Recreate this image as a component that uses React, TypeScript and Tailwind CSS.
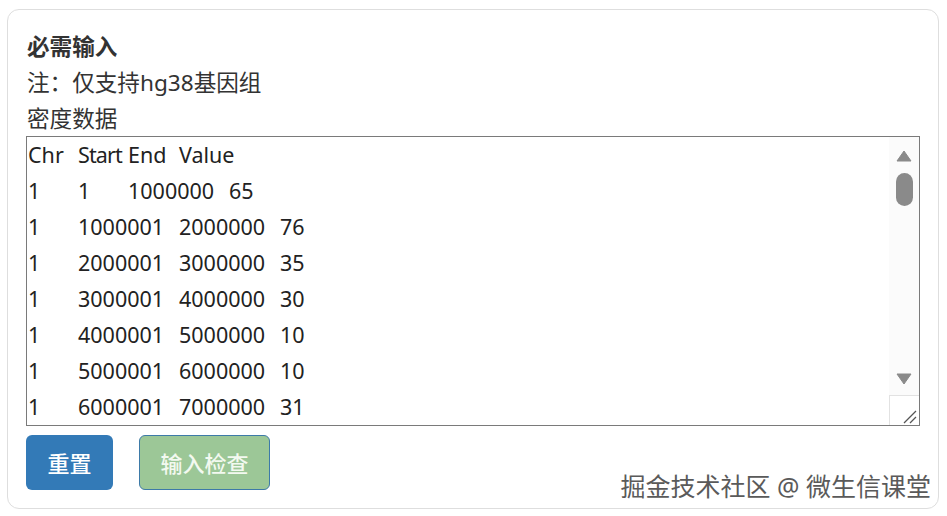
import React from "react";

type Cell = [string, number];
const rows: Cell[][] = [
  [["Chr", 50], ["Start", 50], ["End", 51], ["Value", 0]],
  [["1", 50], ["1", 50], ["1000000", 101], ["65", 0]],
  [["1", 50], ["1000001", 101], ["2000000", 101], ["76", 0]],
  [["1", 50], ["2000001", 101], ["3000000", 101], ["35", 0]],
  [["1", 50], ["3000001", 101], ["4000000", 101], ["30", 0]],
  [["1", 50], ["4000001", 101], ["5000000", 101], ["10", 0]],
  [["1", 50], ["5000001", 101], ["6000000", 101], ["10", 0]],
  [["1", 50], ["6000001", 101], ["7000000", 101], ["31", 0]],
];

export default function App() {
  return (
    <div
      className="w-[947px] h-[516px] bg-white relative overflow-hidden"
      style={{ fontFamily: '"Noto Sans", "Noto Sans CJK SC", sans-serif' }}
    >
      <div className="absolute left-[7px] top-[9px] w-[932px] h-[500px] rounded-[12px] border border-[#dedede]" />
      <div className="relative pt-[29px] pl-[26px] pr-[28px] text-[22.6px] leading-[36px] text-[#333333]">
        <div className="font-bold pl-[1px]">必需输入</div>
        <div className="pl-[1px]">注：仅支持hg38基因组</div>
        <div className="pl-[1px] h-[35px]">密度数据</div>
        <div className="relative w-[894px] h-[290px] border border-[#7a7a7a] bg-white overflow-hidden">
          <div className="pl-[1px] text-[21.5px] text-[#222222] whitespace-nowrap">
            {rows.map((r, i) => (
              <div key={i} className="h-[36px] leading-[36px] flex">
                {r.map(([t, w], j) => (
                  <span
                    key={j}
                    className={t === "Start" ? "tracking-[-0.9px] shrink-0" : "shrink-0"}
                    style={w ? { width: w } : undefined}
                  >
                    {t}
                  </span>
                ))}
              </div>
            ))}
          </div>
          <div className="absolute right-0 top-0 bottom-0 w-[30px] bg-[#fbfbfb] flex flex-col items-center">
            <svg width="16" height="12" viewBox="0 0 16 12" className="mt-[13px]">
              <path d="M8 1 L15 11 L1 11 Z" fill="#8a8a8a" strokeLinejoin="round" stroke="#8a8a8a" strokeWidth="1" />
            </svg>
            <div className="mt-[11px] w-[17px] h-[33px] rounded-full bg-[#8a8a8a] ml-[1px]" />
            <div className="flex-1" />
            <svg width="16" height="12" viewBox="0 0 16 12" className="mb-[40px]">
              <path d="M1 1 L15 1 L8 11 Z" fill="#8a8a8a" strokeLinejoin="round" stroke="#8a8a8a" strokeWidth="1" />
            </svg>
          </div>
          <div className="absolute right-0 bottom-0 w-[30px] h-[30px] bg-white border-l border-t border-[#e2e2e2]">
            <svg width="30" height="30" viewBox="0 0 30 30" className="absolute left-0 top-0">
              <path d="M14 27 L26 15 M20 27 L26 21" stroke="#555555" strokeWidth="1.3" />
            </svg>
          </div>
        </div>
        <div className="flex gap-[26px] mt-[9px]">
          <button className="w-[87px] h-[55px] rounded-[6px] bg-[#337ab7] text-white text-[22px] leading-none font-medium">
            重置
          </button>
          <button className="w-[131px] h-[55px] rounded-[6px] bg-[#9cc797] border border-[#3d7aa8] text-[#f3f9f0] text-[22px] leading-none font-medium">
            输入检查
          </button>
        </div>
      </div>
      <div
        className="absolute right-[16px] top-[470px] text-[25px] leading-[32px] text-[#5a5a5a]"
        style={{ textShadow: "0 0 2px #ffffff, 1px 1px 1px #ffffff, -1px -1px 1px #ffffff" }}
      >
        掘金技术社区 @ 微生信课堂
      </div>
    </div>
  );
}
